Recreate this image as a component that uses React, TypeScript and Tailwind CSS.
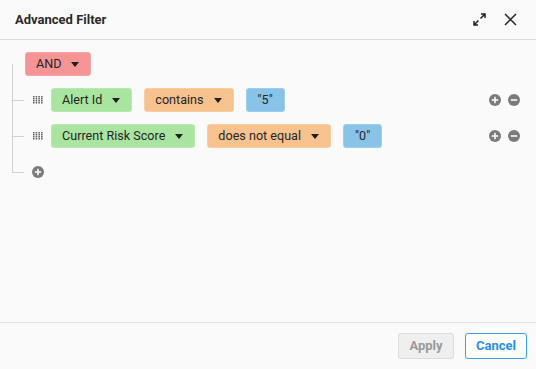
const Caret = () => (
  <svg width="8" height="5" viewBox="0 0 8 5" className="ml-[10px]">
    <path d="M0 0 L8 0 L4 5 Z" fill="#1f1f1f" />
  </svg>
)

const Chip = ({ label, color, caret = true }: { label: string; color: string; caret?: boolean }) => (
  <div className={`flex h-6 items-center rounded-[3px] border pl-[10px] pr-[11px] text-[12.6px] text-[#262626] ${color}`}>
    <span>{label}</span>
    {caret && <Caret />}
  </div>
)

const DragHandle = () => (
  <svg width="10" height="8" viewBox="0 0 10 8">
    {[0, 2, 4, 6].map((y) =>
      [0, 2.7, 5.4, 8.1].map((x) => <rect key={`${x}-${y}`} x={x} y={y} width="1.5" height="1.5" fill="#5f5f5f" />)
    )}
  </svg>
)

const CircleBtn = ({ minus = false }: { minus?: boolean }) => (
  <svg width="12" height="12" viewBox="0 0 12 12">
    <circle cx="6" cy="6" r="6" fill="#7b7b7b" />
    <rect x="2.8" y="5.2" width="6.4" height="1.6" fill="#fafafa" />
    {!minus && <rect x="5.2" y="2.8" width="1.6" height="6.4" fill="#fafafa" />}
  </svg>
)

const rules = [
  { field: 'Alert Id', op: 'contains', value: '"5"' },
  { field: 'Current Risk Score', op: 'does not equal', value: '"0"' },
]

const App = () => {
  return (
    <div className="flex h-[369px] w-[536px] flex-col bg-[#fafafa]" style={{ fontFamily: 'Roboto, "Liberation Sans", Arial, sans-serif' }}>
      <div className="flex h-10 items-center border-b border-[#d9dde2] pl-[15px] pr-[19px]">
        <h1 className="text-[13px] font-bold text-[#2a2a2a]">Advanced Filter</h1>
        <div className="ml-auto flex items-center gap-[18px]">
          <svg width="13" height="13" viewBox="0 0 13 13" fill="none" stroke="#222" strokeWidth="1.5">
            <path d="M7.5 5.5 L12 1 M8 1 H12 V5" />
            <path d="M5.5 7.5 L1 12 M1 8 V12 H5" />
          </svg>
          <svg width="13" height="13" viewBox="0 0 13 13" fill="none" stroke="#222" strokeWidth="1.5">
            <path d="M1 1 L12 12 M12 1 L1 12" />
          </svg>
        </div>
      </div>

      <div className="relative flex flex-1 flex-col gap-3 pl-3 pr-4 pt-3">
        <div className="absolute left-3 top-[24px] h-[108px] w-px bg-[#cdd1d6]" />
        <div className="ml-[13px] flex">
          <Chip label="AND" color="bg-[#f59494] border-[#f7a5a5]" />
        </div>
        {rules.map((r) => (
          <div key={r.field} className="flex h-6 items-center">
            <div className="h-px w-3 bg-[#cdd1d6]" />
            <div className="ml-[9px] mr-2 flex">
              <DragHandle />
            </div>
            <div className="flex gap-3">
              <Chip label={r.field} color="bg-[#a9e5a0] border-[#b7eaaf]" />
              <Chip label={r.op} color="bg-[#f7c28e] border-[#f9cda0]" />
              <div className="flex h-6 items-center rounded-[3px] border border-[#9ccdee] bg-[#89c3e8] px-[11px] text-[12.6px] text-[#262626]">
                {r.value}
              </div>
            </div>
            <div className="ml-auto flex items-center gap-[7px]">
              <CircleBtn />
              <CircleBtn minus />
            </div>
          </div>
        ))}
        <div className="flex h-6 items-center">
          <div className="h-px w-3 bg-[#cdd1d6]" />
          <div className="ml-2 flex">
            <CircleBtn />
          </div>
        </div>
      </div>

      <div className="flex h-[47px] items-start justify-end gap-[11px] border-t border-[#dfe2e6] pr-[9px] pt-[10px]">
        <button className="h-[26px] w-[56px] rounded-[3px] border border-[#dcdcdc] bg-[#efefef] text-[13px] font-bold text-[#9a9a9a]">
          Apply
        </button>
        <button className="h-[26px] w-[62px] rounded-[3px] border border-[#3a9cf0] bg-white text-[13px] font-bold text-[#2a8fe6]">
          Cancel
        </button>
      </div>
    </div>
  )
}

export default App
